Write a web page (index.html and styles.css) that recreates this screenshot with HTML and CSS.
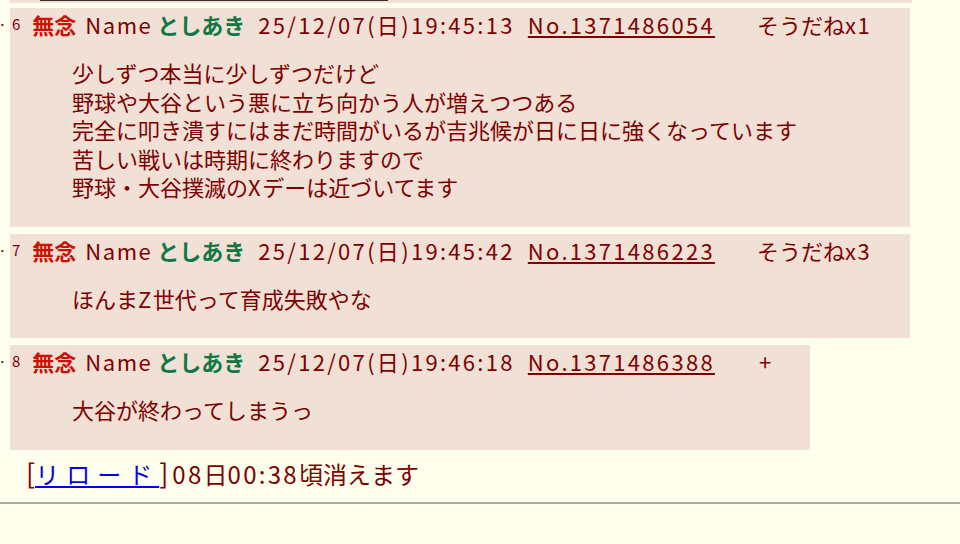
FILE: index.html
```html
<!DOCTYPE html>
<html lang="ja">
<head>
  <meta charset="UTF-8">
  <title>スレッド</title>
  <link rel="stylesheet" href="styles.css">
</head>
<body>

  <div class="thread">
    <!-- tail of the previous reply -->
    <div class="row">
      <span class="rts"></span>
      <div class="reply prev"><div class="prev-line"></div></div>
    </div>

    <div class="row">
      <span class="rts">…</span>
      <div class="reply">
        <div class="head">
          <span class="rsc">6</span>
          <span class="csb">無念</span>
          <span class="lat nm">Name</span>
          <span class="cnm">としあき</span>
          <span class="num cnw">25/12/07(日)19:45:13</span>
          <a class="num cno" href="#">No.1371486054</a>
          <span class="sod">そうだね<span class="lat">x1</span></span>
        </div>
        <blockquote>
          少しずつ本当に少しずつだけど<br>
          野球や大谷という悪に立ち向かう人が増えつつある<br>
          完全に叩き潰すにはまだ時間がいるが吉兆候が日に日に強くなっています<br>
          苦しい戦いは時期に終わりますので<br>
          野球・大谷撲滅の<span class="lat">X</span>デーは近づいてます
        </blockquote>
      </div>
    </div>

    <div class="row">
      <span class="rts">…</span>
      <div class="reply">
        <div class="head">
          <span class="rsc">7</span>
          <span class="csb">無念</span>
          <span class="lat nm">Name</span>
          <span class="cnm">としあき</span>
          <span class="num cnw">25/12/07(日)19:45:42</span>
          <a class="num cno" href="#">No.1371486223</a>
          <span class="sod">そうだね<span class="lat">x3</span></span>
        </div>
        <blockquote>ほんま<span class="lat">Z</span>世代って育成失敗やな</blockquote>
      </div>
    </div>

    <div class="row">
      <span class="rts">…</span>
      <div class="reply">
        <div class="head">
          <span class="rsc">8</span>
          <span class="csb">無念</span>
          <span class="lat nm">Name</span>
          <span class="cnm">としあき</span>
          <span class="num cnw">25/12/07(日)19:46:18</span>
          <a class="num cno" href="#">No.1371486388</a>
          <span class="sod plus">+</span>
        </div>
        <blockquote>大谷が終わってしまうっ</blockquote>
      </div>
    </div>
  </div>

  <div class="reload">
    <span class="br">[</span><a href="#">リロード</a><span class="br">]</span><span class="num">08</span>日<span class="num">00:38</span>頃消えます
  </div>

  <hr>

</body>
</html>
```

FILE: styles.css
```css
body {
  margin: 0;
  background-color: #ffffee;
  color: #800000;
  font-family: "Noto Sans CJK JP", sans-serif;
  font-size: 22px;
  overflow: hidden;
}
a {
  color: #800000;
}
.lat {
  letter-spacing: 1.5px;
}
.num {
  letter-spacing: 2.3px;
}
.thread {
  display: flex;
  flex-direction: column;
}
.row {
  display: flex;
  align-items: flex-start;
  margin-top: 7px;
}
.row:first-child {
  margin-top: 0;
}
.row:nth-child(2) {
  margin-top: 5px;
}
.rts {
  width: 5px;
  padding-right: 5px;
  flex-shrink: 0;
  overflow: hidden;
  direction: rtl;
  white-space: nowrap;
  font-size: 16px;
  line-height: 28px;
  padding-top: 2px;
}
.reply {
  background-color: #f0e0d6;
  padding: 2px 39px 0 0;
}
.prev {
  width: 902px;
  height: 3px;
  padding: 0;
}
.prev-line {
  margin-left: 30px;
  width: 348px;
  height: 1px;
  background-color: #3a2a2a;
}
.head {
  display: flex;
  align-items: center;
  line-height: 28px;
  white-space: nowrap;
}
.rsc {
  font-size: 15px;
  margin-left: 2px;
}
.csb {
  color: #cc1105;
  font-weight: bold;
  margin-left: 12px;
}
.nm {
  margin-left: 9px;
}
.cnm {
  color: #117743;
  font-weight: bold;
  margin-left: 5px;
}
.cnw {
  margin-left: 13px;
}
.cno {
  margin-left: 13px;
}
.sod {
  margin-left: 42px;
}
.plus {
  margin-left: 44px;
}
blockquote {
  margin: 20px 0 26px 62px;
  line-height: 28.5px;
}
.reload {
  margin: 9px 0 0 26px;
  line-height: 28px;
  font-size: 24px;
}
.reload a {
  color: #0000ee;
  letter-spacing: 7px;
}
.reload .br {
  font-size: 27px;
}
.reload .br + .num {
  margin-left: 4px;
}
hr {
  margin: 14px 0 0;
  border: none;
  border-top: 2px solid #aaaaaa;
}
```
